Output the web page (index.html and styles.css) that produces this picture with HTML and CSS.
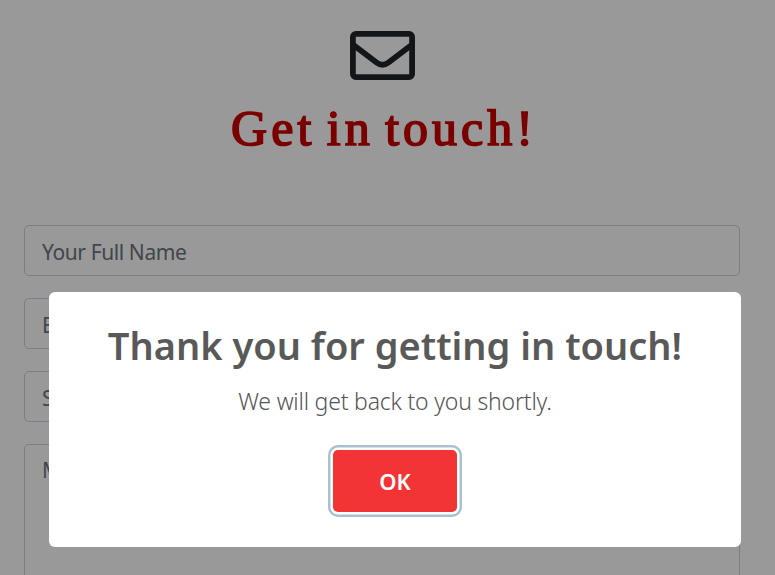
FILE: index.html
```html
<!DOCTYPE html>
<html lang="en">
<head>
<meta charset="utf-8">
<title>Get in touch</title>
<link rel="stylesheet" href="styles.css">
</head>
<body>
<main class="contact">
  <svg class="icon" viewBox="0 0 65 49" fill="none" stroke="currentColor" stroke-width="5.800" stroke-linejoin="round">
    <rect x="2.900" y="2.900" width="59.200" height="43.200" rx="3"/>
    <path d="M3.500 14 26.500 31.500Q32.500 36 38.500 31.500L61.500 14"/>
  </svg>
  <h1 class="title">Get in touch!</h1>
  <form class="form">
    <input class="field" type="text" placeholder="Your Full Name">
    <input class="field" type="text" placeholder="Email Address">
    <input class="field" type="text" placeholder="Subject">
    <textarea class="field message" placeholder="Message"></textarea>
  </form>
</main>
<div class="overlay">
  <section class="modal" role="dialog">
    <h2 class="modal-title">Thank you for getting in touch!</h2>
    <p class="modal-text">We will get back to you shortly.</p>
    <button class="ok" type="button">OK</button>
  </section>
</div>
</body>
</html>
```
FILE: styles.css
```css
* { box-sizing: border-box; }
body {
  margin: 0;
  height: 575px;
  overflow: hidden;
  background: #fff;
  font-family: "Noto Sans", "Open Sans", sans-serif;
}
.contact { padding: 31px 35px 0 24px; }
.icon {
  display: block;
  width: 65px;
  height: 49px;
  margin-left: 326px;
  color: #212529;
}
.title {
  margin: 17px 0 0;
  padding-left: 4px;
  height: 128px;
  text-align: center;
  font: 400 50px/62px "Liberation Serif", serif;
  letter-spacing: 4px;
  word-spacing: -5px;
  -webkit-text-stroke: 1.7px #c00;
  color: #c00;
}
.form { display: flex; flex-direction: column; gap: 22px; }
.field {
  width: 716px;
  height: 51px;
  padding: 3px 17px 0;
  border: 1px solid #ced4da;
  border-radius: 5px;
  background: #fff;
  font: 21px/30px "Noto Sans", sans-serif;
  letter-spacing: -0.4px;
  outline: 0;
}
.field::placeholder { color: #6c757d; opacity: 1; }
.message { height: 131px; padding-top: 10px; border-bottom: 0; border-radius: 5px 5px 0 0; resize: none; }
.overlay {
  position: absolute;
  inset: 0;
  padding: 292px 34px 0 49px;
  background: rgba(0, 0, 0, 0.4);
}
.modal {
  display: flex;
  flex-direction: column;
  align-items: center;
  height: 255px;
  padding-top: 28px;
  border-radius: 6px;
  background: #fff;
}
.modal-title {
  margin: 0;
  font-size: 38px;
  line-height: 50px;
  font-weight: 600;
  white-space: nowrap;
  color: #595959;
}
.modal-text {
  margin: 14px 0 0;
  font-size: 23px;
  line-height: 34px;
  font-weight: 300;
  letter-spacing: -0.2px;
  white-space: nowrap;
  color: #545454;
}
.ok {
  width: 124px;
  height: 62px;
  margin: 32px 0 0;
  padding: 0;
  border: 0;
  border-radius: 5px;
  background: #f33434;
  box-shadow: 0 0 0 2.5px #fff, 0 0 0 5px #aac0d0;
  font: 600 22px/30px "Noto Sans", sans-serif;
  color: #fff;
}
```
